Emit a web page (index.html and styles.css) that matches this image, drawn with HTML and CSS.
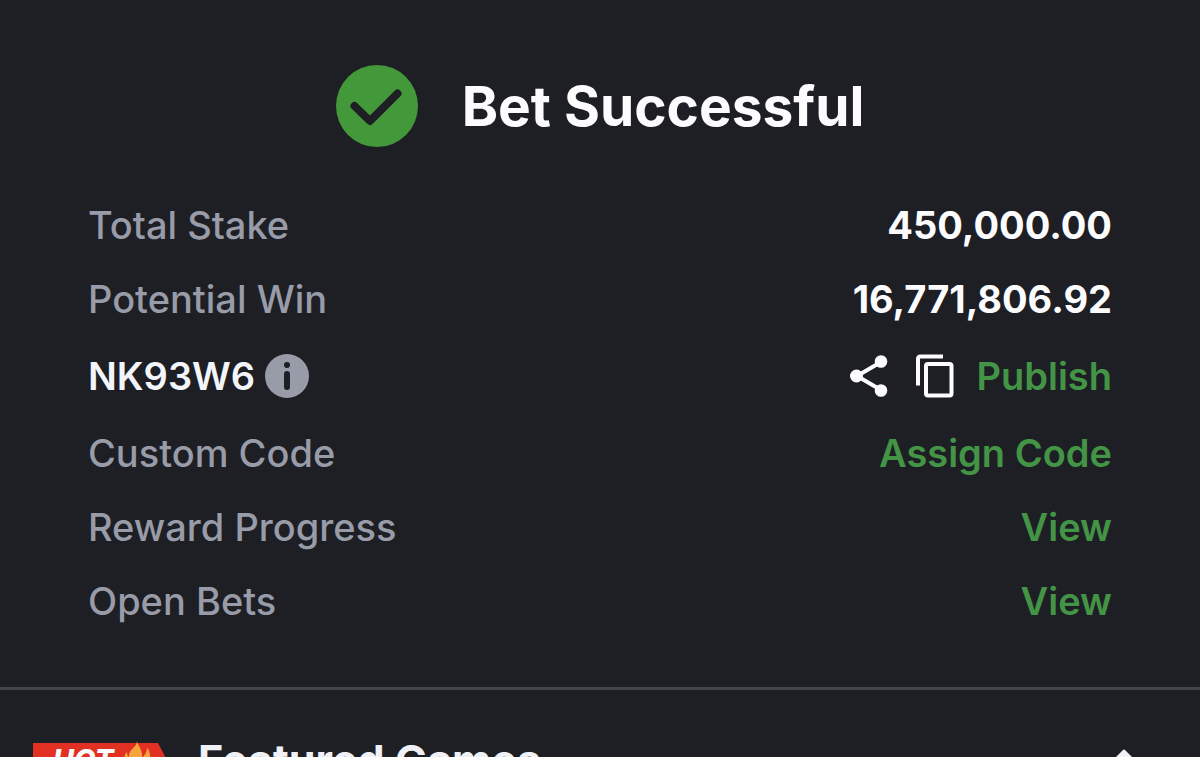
FILE: index.html
```html
<!DOCTYPE html>
<html lang="en">
<head>
    <meta charset="UTF-8">
    <meta name="viewport" content="width=device-width, initial-scale=1">
    <title>Bet Successful</title>
    <link rel="stylesheet" href="styles.css">
</head>
<body>
<main class="result">
    <div class="result-head">
        <svg class="icon-check" viewBox="0 0 82 82" aria-hidden="true">
            <circle cx="41" cy="41" r="41"/>
            <path d="M18.500 41L34 56L61.500 28.500"/>
        </svg>
        <h1>Bet Successful</h1>
    </div>
    <dl class="details">
        <div class="row">
            <dt>Total Stake</dt>
            <dd class="amount">450,000.00</dd>
        </div>
        <div class="row">
            <dt>Potential Win</dt>
            <dd class="amount">16,771,806.92</dd>
        </div>
        <div class="row row-code">
            <dt>
                NK93W6
                <button type="button" aria-label="About this code">
                    <svg class="icon-info" viewBox="0 0 44 44">
                        <circle class="disc" cx="22" cy="22" r="22"/>
                        <circle cx="22" cy="11" r="3"/>
                        <rect x="19" y="17" width="6" height="19" rx="3"/>
                    </svg>
                </button>
            </dt>
            <dd>
                <button type="button" aria-label="Share">
                    <svg class="icon-share" viewBox="0 0 38 42">
                        <path d="M31 7L7 21L31 35"/>
                        <circle cx="6.500" cy="21" r="6.500"/>
                        <circle cx="31" cy="6.500" r="6.300"/>
                        <circle cx="31" cy="35.500" r="6.300"/>
                    </svg>
                </button>
                <button type="button" aria-label="Copy code">
                    <svg class="icon-copy" viewBox="0 0 38 44">
                        <path d="M27 2.500H4.500Q2 2.500 2 5V31.500"/>
                        <rect x="10" y="10" width="25.500" height="31.500" rx="2"/>
                    </svg>
                </button>
                <a href="#publish">Publish</a>
            </dd>
        </div>
        <div class="row">
            <dt>Custom Code</dt>
            <dd><a href="#assign">Assign Code</a></dd>
        </div>
        <div class="row">
            <dt>Reward Progress</dt>
            <dd><a href="#rewards">View</a></dd>
        </div>
        <div class="row">
            <dt>Open Bets</dt>
            <dd><a href="#bets">View</a></dd>
        </div>
    </dl>
</main>
<section class="featured">
    <div class="hot">
        <span>HOT</span>
        <svg class="icon-flame" viewBox="0 0 34 42" aria-hidden="true">
            <path class="outer" d="M17 0C18 5 23 9 22 17C25 14 27 11 27 7C31 11 29 14 31 18C32 17 33 17 33 16C37 28 32 42 17 42C3 42-1 29 2 17C3 18 4 18 5 18C4 15 5 13 7 11C7 14 8 15 9 16C8 8 17 7 17 0Z"/>
            <path class="inner" d="M17 18C19 25 25 26 25 33C25 38 21 41 17 41C11 41 8 37 9 31C10 26 16 24 17 18Z"/>
        </svg>
    </div>
    <h2>Featured Games</h2>
    <button type="button" class="toggle" aria-label="Collapse featured games">
        <svg class="icon-arrow" viewBox="0 0 44 22">
            <path d="M21 1Q22 0 23 1L44 22H0Z"/>
        </svg>
    </button>
</section>
</body>
</html>
```

FILE: styles.css
```css
* {
    box-sizing: border-box;
}
body {
    margin: 0;
    height: 100vh;
    overflow: hidden;
    background: #1e1f25;
    color: #fcfcfe;
    font-family: Inter, "Liberation Sans", sans-serif;
}
h1, h2, dl, dd {
    margin: 0;
}
a {
    color: #439445;
    text-decoration: none;
}
button {
    display: flex;
    padding: 0;
    border: 0;
    background: none;
    color: inherit;
    cursor: pointer;
}
.result {
    padding: 64px 88px 49px;
    border-bottom: 3px solid #42454d;
}
.result-head {
    display: flex;
    align-items: center;
    justify-content: center;
    gap: 44px;
    height: 84px;
    margin-bottom: 40px;
}
.result-head h1 {
    font-size: 55px;
    line-height: 68px;
    font-weight: 700;
}
.row {
    display: flex;
    align-items: center;
    justify-content: space-between;
    height: 74px;
    font-size: 38px;
    line-height: 46px;
}
.row-code {
    height: 80px;
}
.row dt {
    font-weight: 450;
    color: #989ba8;
}
.row dd {
    font-weight: 600;
}
.row .amount {
    font-weight: 700;
}
.row-code dt,
.row-code dd {
    display: flex;
    align-items: center;
}
.row.row-code dt {
    gap: 10px;
    font-weight: 600;
    color: #f4f5fa;
}
.row-code dd a {
    margin-left: 22px;
}
.row-code dd button + button {
    margin-left: 28px;
}
.featured {
    display: flex;
    align-items: center;
    gap: 32px;
    padding: 41px 54px 41px 33px;
}
.featured h2 {
    flex: 1;
    font-size: 43px;
    line-height: 58px;
    font-weight: 700;
    color: #f0f1f6;
}
.hot {
    display: flex;
    align-items: center;
    position: relative;
    width: 133px;
    height: 34px;
    padding-left: 20px;
}
/* slanted red label behind the text */
.hot::before {
    content: "";
    position: absolute;
    inset: 0;
    background: #e23122;
    clip-path: polygon(0 0, 94% 0, 100% 45%, 94% 100%, 0 100%);
}
.hot span {
    position: relative;
    font-size: 28px;
    line-height: 34px;
    font-style: italic;
    font-weight: 800;
}
.icon-flame {
    position: absolute;
    left: 87px;
    bottom: -6px;
    width: 34px;
    height: 42px;
}
.icon-flame .outer {
    fill: #f6a43c;
}
.icon-flame .inner {
    fill: #fbd35c;
}
.icon-check {
    width: 82px;
    height: 82px;
    fill: #439839;
}
.icon-check path {
    fill: none;
    stroke: #1e1f25;
    stroke-width: 8;
    stroke-linecap: round;
    stroke-linejoin: round;
}
.icon-info {
    width: 44px;
    height: 44px;
    fill: #1e1f25;
}
.icon-info .disc {
    fill: #989ba8;
}
.icon-share {
    width: 38px;
    height: 42px;
    fill: currentColor;
}
.icon-share path {
    fill: none;
    stroke: currentColor;
    stroke-width: 4;
}
.icon-copy {
    width: 38px;
    height: 44px;
    fill: none;
    stroke: currentColor;
    stroke-width: 4;
}
.icon-arrow {
    width: 44px;
    height: 22px;
    fill: #f0f1f6;
}
```
